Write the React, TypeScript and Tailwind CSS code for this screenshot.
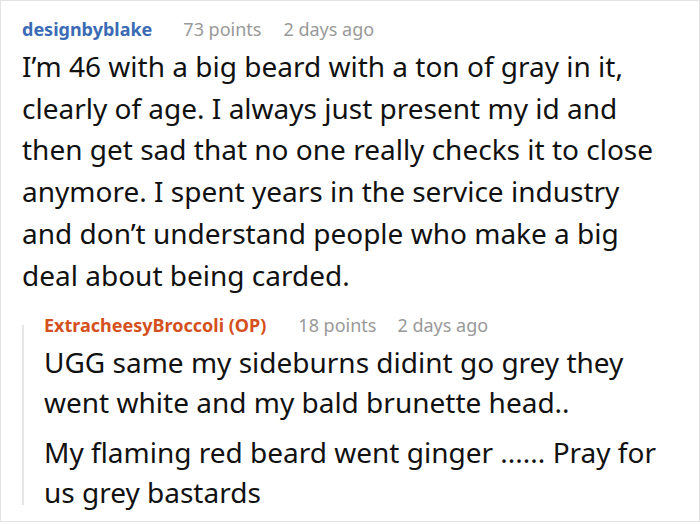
export default function App() {
  return (
    <div className="w-[700px] h-[524px] bg-white" style={{ fontFamily: '"Noto Sans", sans-serif' }}>
      <div className="h-[522px] border border-[#e3e3e3] pl-[21px] pt-[16px] text-[#111]">
        <div className="flex items-baseline text-[18px] leading-[24px]">
          <span className="font-bold text-[#3b6bb5]">designbyblake</span>
          <span className="ml-[31px] text-[#999]">73 points</span>
          <span className="ml-[22px] text-[#999]">2 days ago</span>
        </div>
        <p className="mt-[5px] text-[28px] leading-[41.7px] w-[640px]">
          I’m 46 with a big beard with a ton of gray in it, clearly of age. I always just present my id and then get sad that no one really checks it to close anymore. I spent years in the service industry and don’t understand people who make a big deal about being carded.
        </p>
        <div className="mt-[17px] flex">
          <div className="w-[2px] bg-[#e6e6e6] mt-[12px] mb-[7px]" />
          <div className="pl-[20px]">
            <div className="flex items-baseline text-[18px] leading-[24px]">
              <span className="font-bold text-[#d4501c]">ExtracheesyBroccoli (OP)</span>
              <span className="ml-[32px] text-[#999]">18 points</span>
              <span className="ml-[21px] text-[#999]">2 days ago</span>
            </div>
            <p className="mt-[5px] text-[28px] leading-[40px] w-[630px]">
              UGG same my sideburns didint go grey they went white and my bald brunette head..
            </p>
            <p className="mt-[10px] text-[28px] leading-[40px] w-[630px]">
              My flaming red beard went ginger ...... Pray for us grey bastards
            </p>
          </div>
        </div>
      </div>
    </div>
  );
}
